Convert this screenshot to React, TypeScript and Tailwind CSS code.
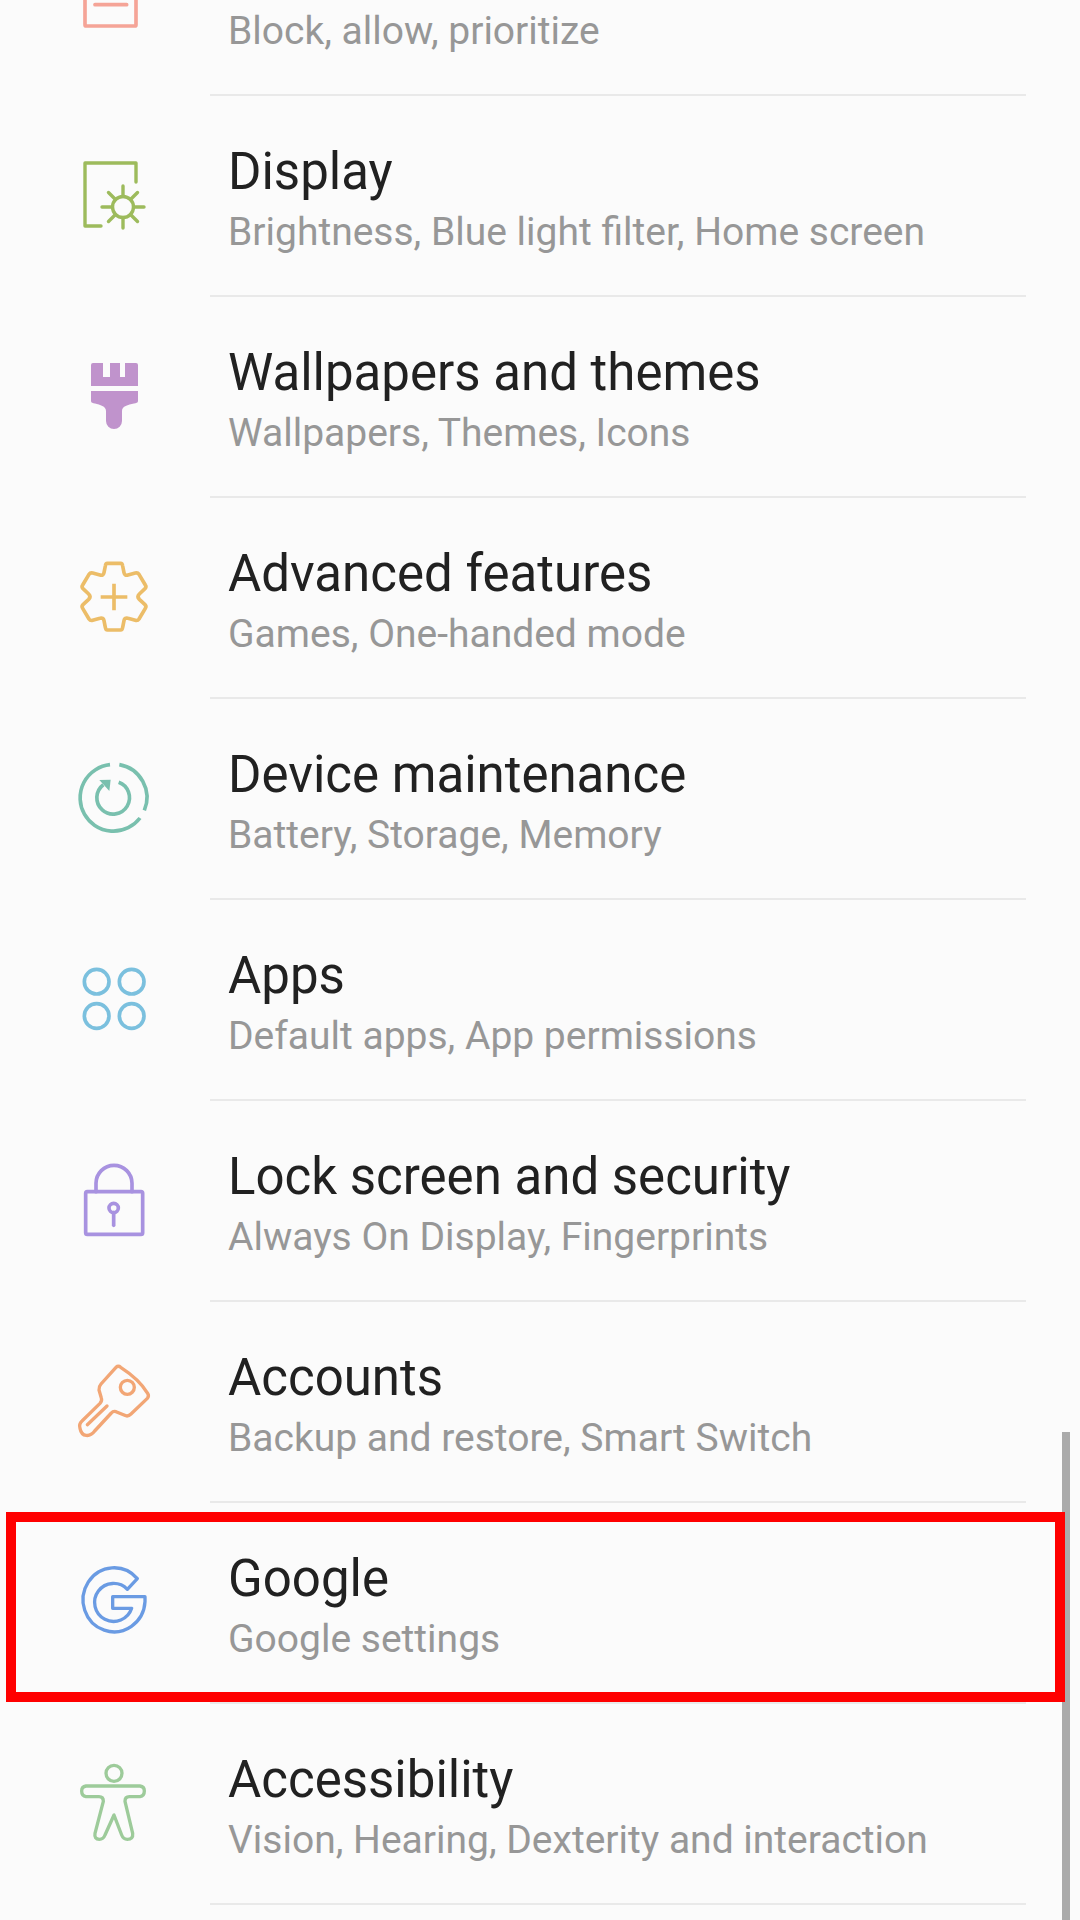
const rows = [
  { title: "", sub: "Block, allow, prioritize" },
  { title: "Display", sub: "Brightness, Blue light filter, Home screen" },
  { title: "Wallpapers and themes", sub: "Wallpapers, Themes, Icons" },
  { title: "Advanced features", sub: "Games, One-handed mode" },
  { title: "Device maintenance", sub: "Battery, Storage, Memory" },
  { title: "Apps", sub: "Default apps, App permissions" },
  { title: "Lock screen and security", sub: "Always On Display, Fingerprints" },
  { title: "Accounts", sub: "Backup and restore, Smart Switch" },
  { title: "Google", sub: "Google settings" },
  { title: "Accessibility", sub: "Vision, Hearing, Dexterity and interaction" },
];

function Icon({ index }: { index: number }) {
  const common = { width: 80, height: 80, fill: "none", strokeLinecap: "round", strokeLinejoin: "round" } as const;
  switch (index) {
    case 0:
      return (
        <svg {...common} viewBox="222 -138 240 240" stroke="#f5a497" strokeWidth="11" className="overflow-visible">
          <rect x="255" y="-110" width="153" height="188" rx="4" />
          <path d="M285 14H380" />
        </svg>
      );
    case 1:
      return (
        <svg {...common} viewBox="0 0 80 80" stroke="#9dbb5c" strokeWidth="3.4">
          <path d="M27 71H11V8H62V27" />
          <circle cx="49" cy="52" r="10.500" />
          <path d="M49 31V41.500M49 62.500V73M28 52H38.500M59.500 52H70M34.500 37.500L41.500 44.500M63.500 37.500L56.500 44.500M34.500 66.500L41.500 59.500M63.500 66.500L56.500 59.500" />
        </svg>
      );
    case 2:
      return (
        <svg {...common} viewBox="0 0 80 80" stroke="none">
          <path
            fill="#c093cc"
            d="M17 9a2 2 0 0 1 2-2H29V21H36V7H46V21H51V7H62a2 2 0 0 1 2 2V30H17ZM17 35H64V45C64 47 62 47 60 47.500C54 49 48 50 48 55V65A8 8 0 0 1 32 65V55C32 50 26 49 21 47.500C19 47 17 47 17 45Z"
          />
        </svg>
      );
    case 3:
      return (
        <svg {...common} viewBox="72 81 240 240" stroke="#ecbd68" strokeWidth="11">
          <path d="M172 100H212Q217 100 218 108L222 128Q224 138 234 135L256 129Q263 127 267 133L286 165Q290 171 285 176L268 192Q260 200 268 208L285 224Q290 229 286 235L267 267Q263 273 256 271L234 265Q224 262 222 272L218 292Q217 300 212 300H172Q167 300 166 292L162 272Q160 262 150 265L128 271Q121 273 117 267L98 235Q94 229 99 224L116 208Q124 200 116 192L99 176Q94 171 98 165L117 133Q121 127 128 129L150 135Q160 138 162 128L166 108Q167 100 172 100Z" />
          <path d="M152 201H232M192 161V241" strokeLinecap="butt" />
        </svg>
      );
    case 4:
      return (
        <svg {...common} viewBox="72 684 240 240" stroke="#79c0ae" strokeWidth="11">
          <path d="M208 704A100 100 0 0 1 283 841" strokeLinecap="butt" />
          <path d="M270 864A100 100 0 1 1 180 704" strokeLinecap="butt" />
          <path d="M206 757A49 49 0 1 1 160 764" strokeLinecap="butt" />
          <path d="M148 750L182 749L178 783Z" fill="#79c0ae" stroke="none" />
        </svg>
      );
    case 5:
      return (
        <svg {...common} viewBox="72 27 240 240" stroke="#7bc0de" strokeWidth="11">
          <circle cx="140" cy="95" r="37" />
          <circle cx="245" cy="95" r="37" />
          <circle cx="140" cy="198" r="37" />
          <circle cx="245" cy="198" r="37" />
        </svg>
      );
    case 6:
      return (
        <svg {...common} viewBox="72 630 240 240" stroke="#a892e0" strokeWidth="11">
          <rect x="107" y="725" width="171" height="128" rx="5" />
          <path d="M138 725V700A54 54 0 0 1 246 700V725" />
          <circle cx="191" cy="774" r="14" />
          <path d="M191 788V826" />
        </svg>
      );
    case 7:
      return (
        <svg {...common} viewBox="72 63 240 240" stroke="#f2a675" strokeWidth="10">
          <path d="M198 82Q205 76 212 82C240 100 275 130 293 160Q298 168 292 175L243 222Q234 231 224 226L198 215Q190 212 184 219L134 273C120 292 95 292 90 265Q86 252 96 243L150 190Q157 182 154 174L147 150Q146 140 153 132Z" />
          <circle cx="232" cy="142" r="21" />
          <path d="M171 198L112 254" />
        </svg>
      );
    case 8:
      return (
        <svg {...common} viewBox="72 666 240 240" stroke="#6a9be3" strokeWidth="10">
          <path d="M262 716L232 748A57 57 0 1 0 245 805H188V770H285V785A93 96 0 1 1 262 716Z" />
        </svg>
      );
    default:
      return (
        <svg {...common} viewBox="72 69 240 240" stroke="#9dcb9a" strokeWidth="10">
          <circle cx="192" cy="100" r="24" />
          <path d="M108 138H270Q283 140 283 153Q283 168 270 170H238Q225 170 225 184L248 280Q250 298 232 298Q220 298 215 285L192 225L165 285Q160 298 148 298Q132 298 135 280L160 184Q160 170 147 170H108Q95 168 95 153Q95 140 108 138Z" />
        </svg>
      );
  }
}

export default function App() {
  return (
    <div className="relative h-[1920px] w-[1080px] overflow-hidden bg-[#fbfbfb] font-['Roboto',sans-serif]">
      <div className="-mt-[105px] flex flex-col">
        {rows.map((row, i) => (
          <div key={row.sub} className="flex h-[201px] items-center">
            <div className="flex w-[210px] shrink-0 justify-center pb-[3px] pl-[18px]">
              <Icon index={i} />
            </div>
            <div className="mr-[54px] flex h-full flex-1 flex-col border-b-2 border-[#e9e9e9] pl-[18px] pt-[44px]">
              <div className="h-[64px] text-[51px] leading-[64px] text-[#212121]">{row.title}</div>
              <div className="h-[56px] text-[39px] leading-[56px] text-[#979797]">{row.sub}</div>
            </div>
          </div>
        ))}
      </div>
      {/* scroll thumb */}
      <div className="absolute right-[10px] top-[1432px] h-[488px] w-[8px] bg-[#aaaaaa]" />
      {/* highlight round Google */}
      <div className="absolute left-[6px] top-[1512px] h-[190px] w-[1059px] border-[10px] border-[#ff0000]" />
    </div>
  );
}
